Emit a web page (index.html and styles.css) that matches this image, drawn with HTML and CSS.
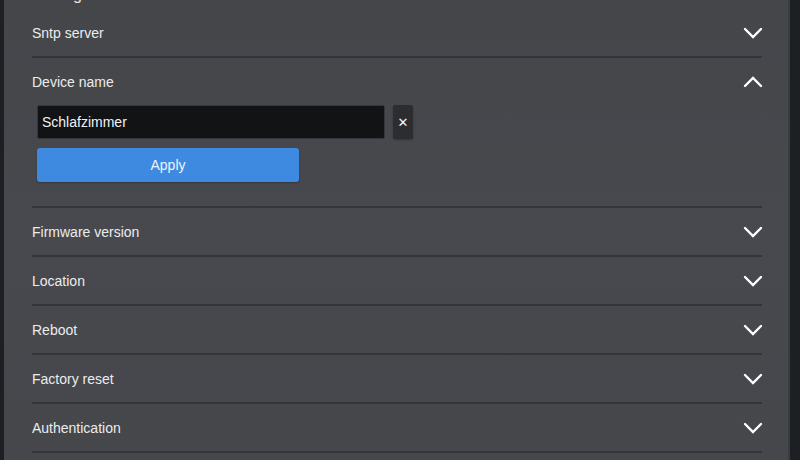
FILE: index.html
```html
<!DOCTYPE html>
<html>
<head>
<meta charset="utf-8">
<link rel="stylesheet" href="styles.css">
</head>
<body>
<div class="panel">
  <div class="list">
    <div class="title"><span>Settings</span></div>
    <div class="item">
      <div class="head"><span>Sntp server</span>
        <svg class="chev" viewBox="0 0 20 12"><path d="M2 2 L10 10 L18 2"/></svg></div>
    </div>
    <div class="item open">
      <div class="head"><span>Device name</span>
        <svg class="chev" viewBox="0 0 20 12"><path d="M2 10 L10 2 L18 10"/></svg></div>
      <div class="body">
        <div class="field">
          <div class="input">Schlafzimmer</div>
          <div class="clear">✕</div>
        </div>
        <div class="apply">Apply</div>
      </div>
    </div>
    <div class="item">
      <div class="head"><span>Firmware version</span>
        <svg class="chev" viewBox="0 0 20 12"><path d="M2 2 L10 10 L18 2"/></svg></div>
    </div>
    <div class="item">
      <div class="head"><span>Location</span>
        <svg class="chev" viewBox="0 0 20 12"><path d="M2 2 L10 10 L18 2"/></svg></div>
    </div>
    <div class="item">
      <div class="head"><span>Reboot</span>
        <svg class="chev" viewBox="0 0 20 12"><path d="M2 2 L10 10 L18 2"/></svg></div>
    </div>
    <div class="item">
      <div class="head"><span>Factory reset</span>
        <svg class="chev" viewBox="0 0 20 12"><path d="M2 2 L10 10 L18 2"/></svg></div>
    </div>
    <div class="item">
      <div class="head"><span>Authentication</span>
        <svg class="chev" viewBox="0 0 20 12"><path d="M2 2 L10 10 L18 2"/></svg></div>
    </div>
  </div>
</div>
</body>
</html>
```
FILE: styles.css
```css
html, body {
  margin: 0;
  padding: 0;
  height: 100%;
  overflow: hidden;
  background: #1d2023;
  font-family: "Liberation Sans", Arial, sans-serif;
}
.panel {
  margin-left: 4px;
  width: 786px;
  height: 100%;
  background: linear-gradient(180deg, #44464a 0%, #47494e 50%, #45474b 100%);
  border-right: 2px solid #3a3c40;
  box-sizing: border-box;
}
.list {
  padding: 0 26px 0 28px;
}
.title {
  color: #e6e6e6;
  font-size: 16px;
  height: 9px;
  overflow: hidden;
}
.title span {
  display: block;
  line-height: 18px;
  margin-top: -14px;
}
.item {
  border-bottom: 2px solid #333539;
}
.head {
  height: 47px;
  display: flex;
  align-items: center;
  justify-content: space-between;
  color: #ececec;
  font-size: 14px;
}
.chev {
  width: 20px;
  height: 12px;
  margin-right: -1px;
  fill: none;
  stroke: #ffffff;
  stroke-width: 2.4;
  stroke-linecap: round;
  stroke-linejoin: miter;
}
.body {
  padding: 0 0 24px 5px;
}
.field {
  display: flex;
  align-items: stretch;
  gap: 8px;
}
.input {
  width: 348px;
  height: 34px;
  box-sizing: border-box;
  background: #111315;
  border: 1px solid #34363a;
  border-radius: 2px;
  color: #f2f2f2;
  font-size: 14px;
  line-height: 32px;
  padding-left: 4px;
}
.clear {
  width: 20px;
  height: 34px;
  background: #2b2d31;
  border-radius: 2px;
  color: #f5f5f5;
  font-size: 13px;
  font-family: "DejaVu Sans", sans-serif;
  font-weight: bold;
  display: flex;
  align-items: center;
  justify-content: center;
  box-shadow: 0 1px 2px rgba(0,0,0,0.3);
}
.apply {
  margin-top: 9px;
  width: 262px;
  height: 34px;
  background: #3d8ae0;
  border-radius: 3px;
  color: #eef4ff;
  font-size: 14px;
  display: flex;
  align-items: center;
  justify-content: center;
  box-shadow: 0 1px 2px rgba(0,0,0,0.25);
}
```
